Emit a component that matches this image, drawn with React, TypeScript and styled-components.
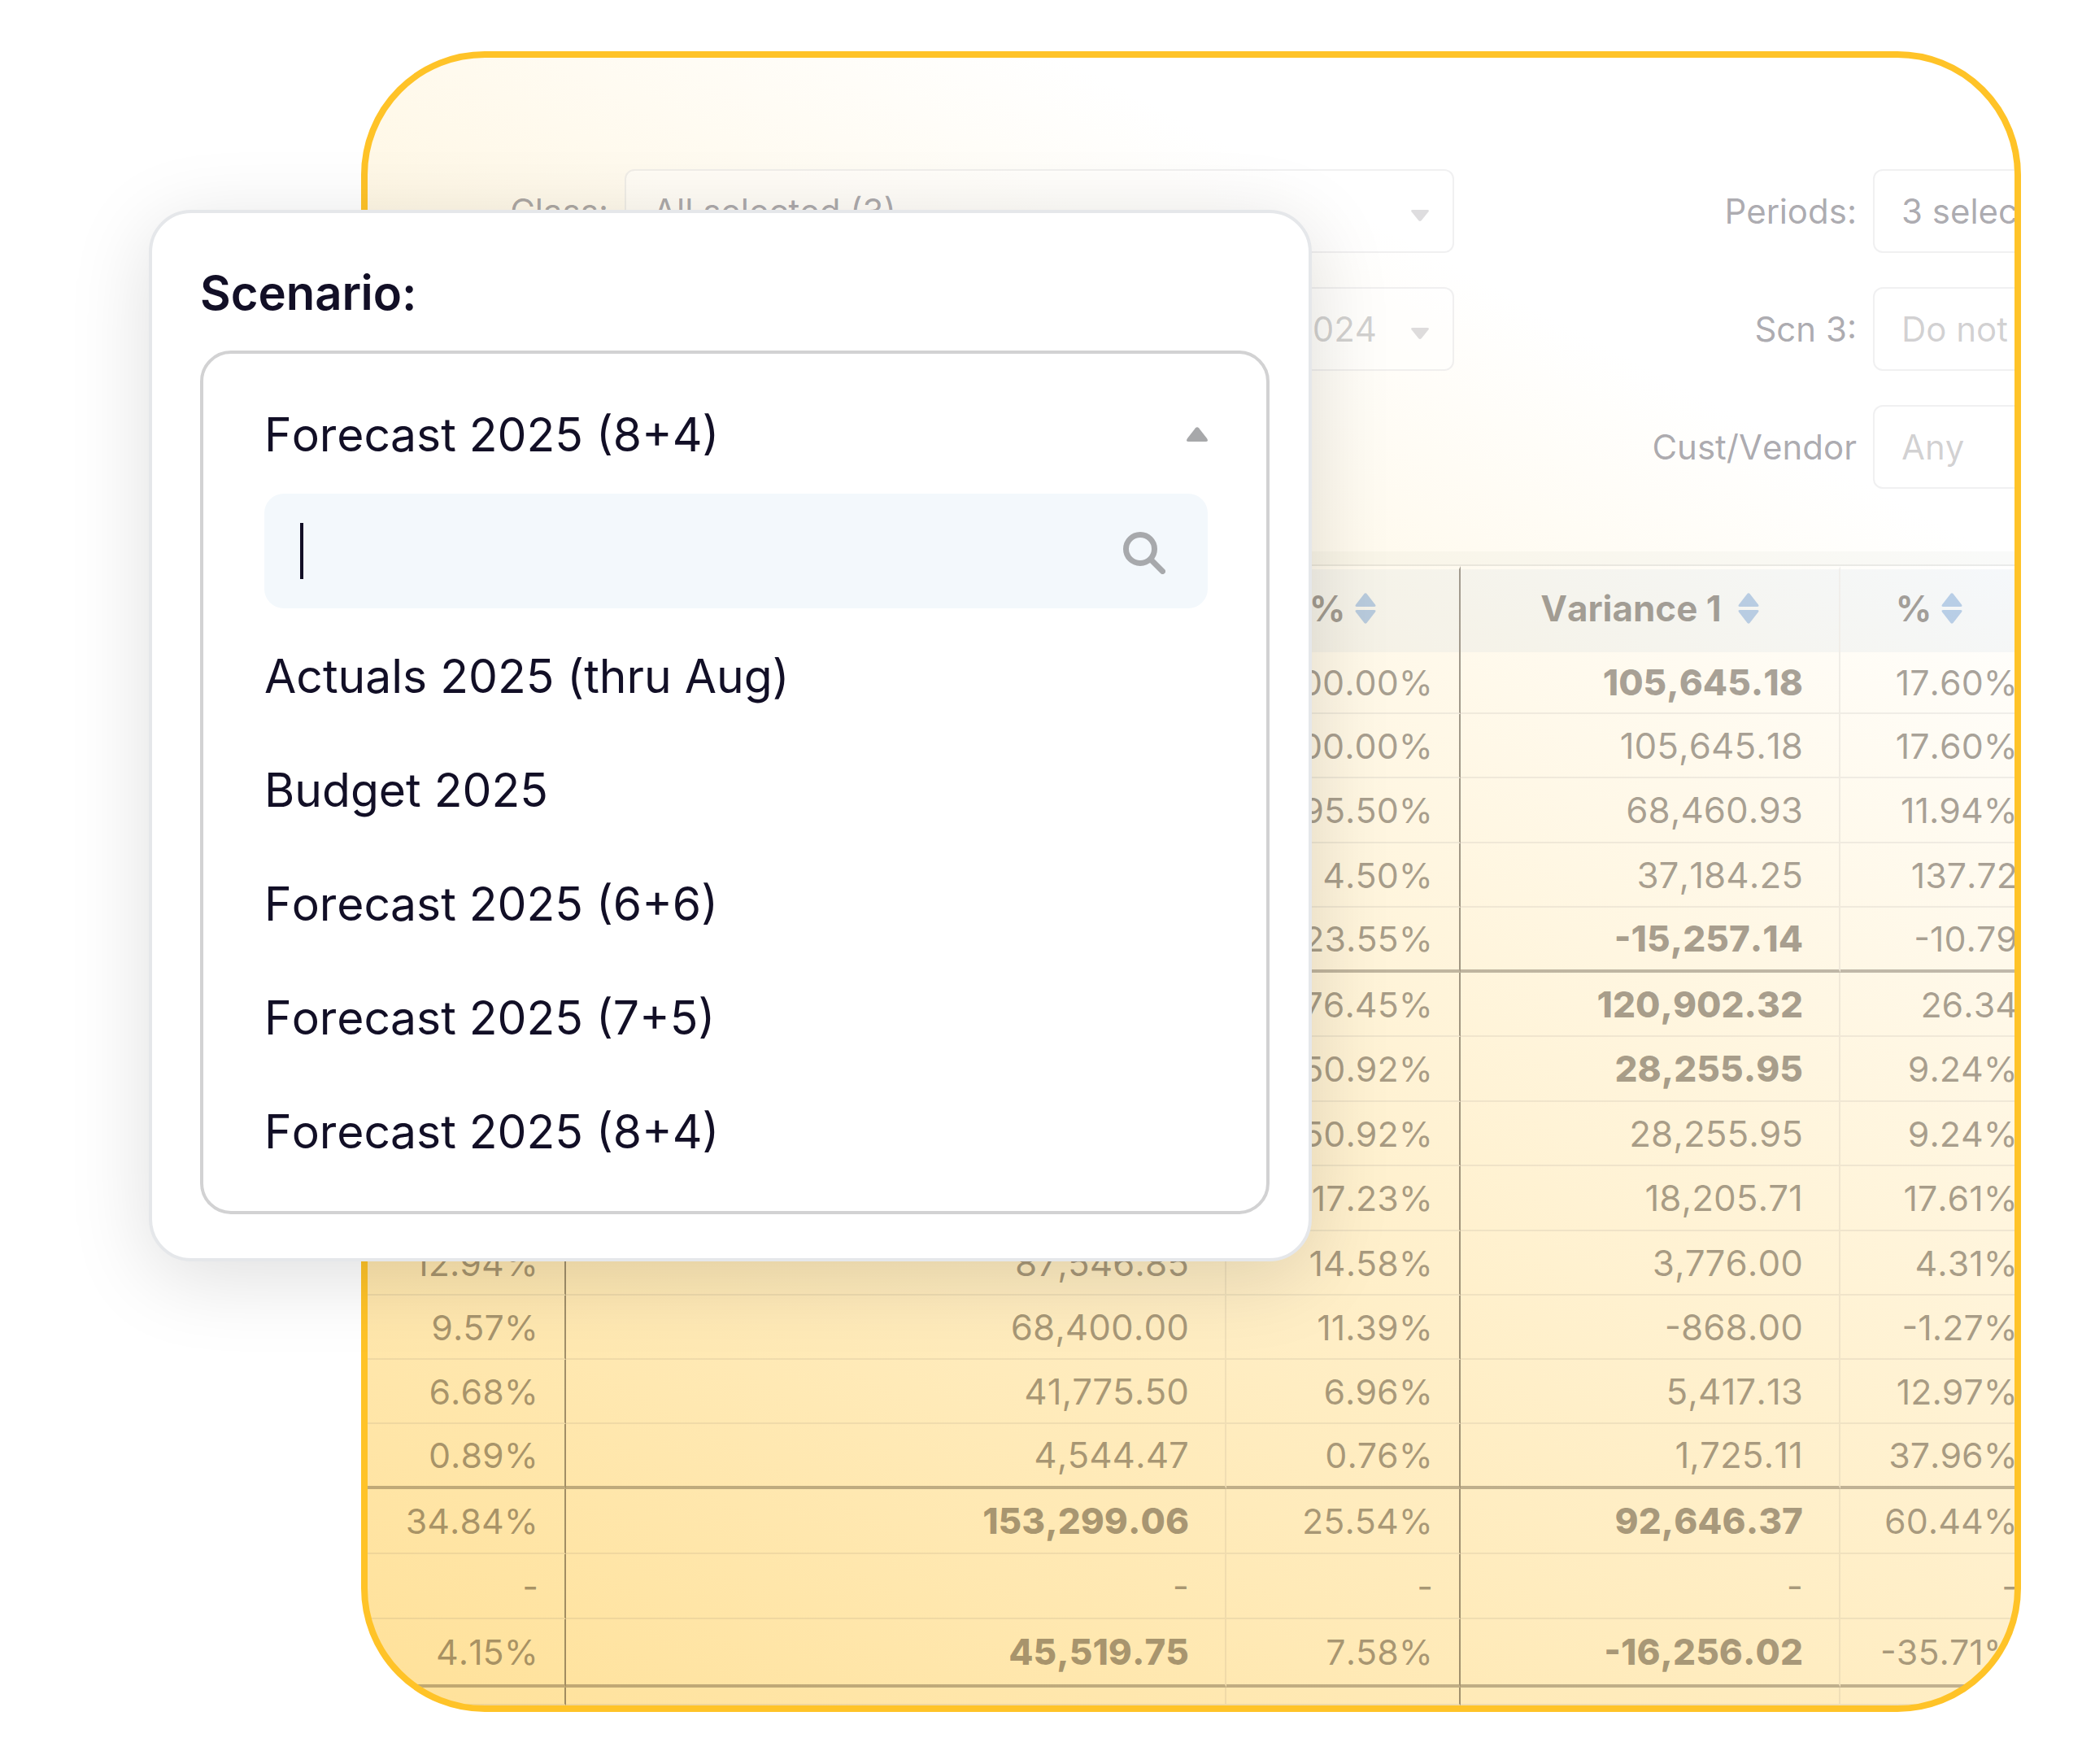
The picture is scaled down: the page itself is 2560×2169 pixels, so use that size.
import React, { useState } from "react";
import styled, { createGlobalStyle, css } from "styled-components";

const navy = "#120f26";
const faded = "rgba(18, 14, 30, 0.37)";
const cellInk = "rgba(24, 12, 0, 0.38)";
const hairline = "rgba(40, 40, 60, 0.07)";

const GlobalStyle = createGlobalStyle`
  *, *::before, *::after { box-sizing: border-box; }
  body { margin: 0; background: #fff; }
  body, button, input, select {
    font-family: Inter, "Liberation Sans", sans-serif;
    font-kerning: none;
  }
`;

const Page = styled.main`
  position: relative;
  padding: 63px 75px 65px 444px;
`;

const Report = styled.section`
  overflow: hidden;
  border: 8px solid #ffc328;
  border-radius: 152px;
  background: linear-gradient(208deg, #fff 20%, #ffe199 100%);
`;

const Filters = styled.div`
  display: grid;
  grid-template-columns: minmax(0, 316fr) minmax(0, 1020fr) minmax(0, 515fr) minmax(0, 174fr);
  grid-auto-rows: 103px;
  row-gap: 42px;
  padding: 137px 0 77px;
`;

const FilterLabel = styled.label<{ $column: number }>`
  grid-column: ${(p) => p.$column};
  align-self: center;
  padding-right: 20px;
  text-align: right;
  font-size: 42px;
  line-height: 52px;
  white-space: nowrap;
  color: ${faded};
`;

const FilterBox = styled.div<{ $wide?: boolean }>`
  display: flex;
  align-items: center;
  width: ${(p) => (p.$wide ? "auto" : "400px")};
  padding: 0 29px 0 33px;
  border: 2px solid ${hairline};
  border-radius: 12px;
  background: rgba(255, 255, 255, 0.4);
`;

const FilterSelect = styled.select<{ $muted?: boolean; $end?: boolean }>`
  flex: 1;
  min-width: 0;
  height: 100%;
  padding: 0 42px 0 0;
  border: 0;
  appearance: none;
  background: transparent;
  font-size: 42px;
  color: ${(p) => (p.$muted ? "rgba(18, 14, 20, 0.2)" : faded)};
  text-align-last: ${(p) => (p.$end ? "right" : "left")};
`;

const FilterCaret = styled.svg`
  width: 22px;
  height: 14px;
  margin-top: 10px;
  fill: rgba(18, 14, 30, 0.14);
`;

const TableEdge = styled.div`
  height: 18px;
  border-bottom: 2px solid rgba(40, 40, 40, 0.07);
  background: rgba(60, 80, 60, 0.03);
`;

const Table = styled.table`
  width: calc(100% + 4px);
  table-layout: fixed;
  border-collapse: separate;
  border-spacing: 0;
  font-size: 44px;
  line-height: 52px;
  color: ${cellInk};
`;

const Col = styled.col<{ $share: number }>`
  width: ${(p) => p.$share}%;
`;

type Rule = "dark" | "light" | "none";

const sideRule = css<{ $rule: Rule }>`
  border-right: ${(p) =>
    p.$rule === "dark"
      ? "2px solid rgba(22, 12, 0, 0.4)"
      : p.$rule === "light"
      ? `2px solid ${hairline}`
      : "0"};
`;

const Heading = styled.th<{ $rule: Rule }>`
  height: 106px;
  padding: 0 0 6px;
  border-top: 4px solid transparent;
  background: rgba(60, 110, 170, 0.05);
  background-clip: padding-box;
  font-weight: 700;
  ${sideRule}
`;

const HeadingInner = styled.span<{ $gap: number }>`
  display: flex;
  align-items: center;
  justify-content: center;
  gap: ${(p) => p.$gap}px;
`;

const SortButton = styled.button`
  display: flex;
  padding: 0;
  border: 0;
  background: none;
  svg {
    width: 26px;
    height: 38px;
    fill: rgba(72, 130, 198, 0.35);
  }
`;

const Row = styled.tr<{ $height: number; $heavy?: boolean }>`
  height: ${(p) => p.$height}px;
  td {
    border-bottom: ${(p) =>
      p.$heavy ? "4px solid rgba(22, 12, 0, 0.27)" : `2px solid ${hairline}`};
  }
`;

const Cell = styled.td<{ $rule: Rule; $pad: number; $amount: boolean; $bold?: boolean }>`
  padding: 0 ${(p) => p.$pad}px 0 0;
  text-align: right;
  white-space: nowrap;
  font-size: ${(p) => (p.$amount ? 44 : 43)}px;
  font-weight: ${(p) => (p.$bold ? 800 : 400)};
  ${sideRule}
`;

const Popup = styled.section`
  position: absolute;
  top: 258px;
  left: 183px;
  width: 1430px;
  padding: 62px 48px 54px 59px;
  border: 4px solid #e5e7ea;
  border-radius: 52px;
  background: #fff;
  box-shadow: 0 20px 100px rgba(0, 0, 0, 0.13);
  color: ${navy};
`;

const PopupTitle = styled.h2`
  margin: 0 0 35px;
  font-size: 58px;
  line-height: 72px;
  font-weight: 600;
`;

const Dropdown = styled.div`
  padding: 28px 72px 28px 75px;
  border: 4px solid #d2d2d3;
  border-radius: 38px;
`;

const Current = styled.button`
  display: flex;
  align-items: center;
  justify-content: space-between;
  width: 100%;
  height: 144px;
  padding: 0 0 2px;
  border: 0;
  background: none;
  font-size: 57px;
  color: inherit;
  svg {
    width: 26px;
    height: 18px;
    fill: #a7a8aa;
  }
`;

const SearchField = styled.label`
  display: flex;
  align-items: center;
  height: 141px;
  margin-bottom: 13px;
  padding: 0 52px 0 44px;
  border-radius: 24px;
  background: #f3f8fc;
  svg {
    width: 52px;
    height: 52px;
    margin-top: 4px;
    stroke: #a7a9ac;
  }
`;

const Caret = styled.span`
  width: 4px;
  height: 69px;
  background: ${navy};
`;

const SearchInput = styled.input`
  flex: 1;
  min-width: 0;
  height: 100%;
  border: 0;
  outline: 0;
  background: transparent;
  font-size: 57px;
  color: inherit;
  caret-color: transparent;
`;

const Options = styled.ul`
  margin: 0;
  padding: 0;
  list-style: none;
`;

const Option = styled.button`
  display: block;
  width: 100%;
  height: 140px;
  padding: 0;
  border: 0;
  background: none;
  text-align: left;
  font-size: 57px;
  color: inherit;
`;

const Down = () => (
  <FilterCaret viewBox="0 0 22 14" aria-hidden="true">
    <path d="M2 0h18q3 0 1.300 2.500l-8.500 10.500q-1.800 2-3.600 0L.7 2.500Q-1 0 2 0z" />
  </FilterCaret>
);

const Sorter = ({ name }: { name: string }) => (
  <SortButton type="button" aria-label={`Sort by ${name}`}>
    <svg viewBox="0 0 26 38" aria-hidden="true">
      <path d="M11.500 1q1.500-1.600 3 0l10.500 13.500q1.500 2.500-1.500 2.500h-21q-3 0-1.500-2.500z" />
      <path d="M11.500 37q1.500 1.600 3 0l10.500-13.500q1.500-2.500-1.500-2.500h-21q-3 0-1.500 2.500z" />
    </svg>
  </SortButton>
);

type Line = {
  cells: [string, string, string, string, string];
  strong?: boolean;
  heavy?: boolean;
  height: number;
};

const lines: Line[] = [
  { cells: ["", "", "100.00%", "105,645.18", "17.60%"], strong: true, height: 76 },
  { cells: ["", "", "100.00%", "105,645.18", "17.60%"], height: 79 },
  { cells: ["", "", "95.50%", "68,460.93", "11.94%"], height: 80 },
  { cells: ["", "", "4.50%", "37,184.25", "137.72"], height: 79 },
  { cells: ["", "", "23.55%", "-15,257.14", "-10.79"], strong: true, heavy: true, height: 80 },
  { cells: ["", "", "76.45%", "120,902.32", "26.34"], strong: true, height: 79 },
  { cells: ["", "", "50.92%", "28,255.95", "9.24%"], strong: true, height: 80 },
  { cells: ["", "", "50.92%", "28,255.95", "9.24%"], height: 79 },
  { cells: ["", "", "17.23%", "18,205.71", "17.61%"], height: 80 },
  { cells: ["12.94%", "87,546.85", "14.58%", "3,776.00", "4.31%"], height: 79 },
  { cells: ["9.57%", "68,400.00", "11.39%", "-868.00", "-1.27%"], height: 79 },
  { cells: ["6.68%", "41,775.50", "6.96%", "5,417.13", "12.97%"], height: 79 },
  { cells: ["0.89%", "4,544.47", "0.76%", "1,725.11", "37.96%"], heavy: true, height: 80 },
  { cells: ["34.84%", "153,299.06", "25.54%", "92,646.37", "60.44%"], strong: true, height: 80 },
  { cells: ["-", "-", "-", "-", "-"], height: 80 },
  { cells: ["4.15%", "45,519.75", "7.58%", "-16,256.02", "-35.71%"], strong: true, heavy: true, height: 84 },
  { cells: ["", "", "", "", ""], height: 22 },
];

const columns: {
  title: string;
  rule: Rule;
  pad: number;
  share: number;
  gap: number;
  amount: boolean;
}[] = [
  { title: "", rule: "dark", pad: 32, share: 244, gap: 0, amount: false },
  { title: "", rule: "light", pad: 44, share: 812, gap: 0, amount: true },
  { title: "%", rule: "dark", pad: 32, share: 288, gap: 12, amount: false },
  { title: "Variance 1", rule: "light", pad: 44, share: 467, gap: 20, amount: true },
  { title: "%", rule: "none", pad: 0, share: 218, gap: 12, amount: false },
];
const totalShare = 2029;

const scenarios = [
  "Actuals 2025 (thru Aug)",
  "Budget 2025",
  "Forecast 2025 (6+6)",
  "Forecast 2025 (7+5)",
  "Forecast 2025 (8+4)",
];

export default function App() {
  const [scenario, setScenario] = useState("Forecast 2025 (8+4)");
  const [query, setQuery] = useState("");
  const shown = scenarios.filter((s) => s.toLowerCase().includes(query.toLowerCase()));

  return (
    <Page>
      <GlobalStyle />
      <Report>
        <Filters>
          <FilterLabel $column={1} htmlFor="class">Class:</FilterLabel>
          <FilterBox $wide>
            <FilterSelect id="class"><option>All selected (3)</option></FilterSelect>
            <Down />
          </FilterBox>
          <FilterLabel $column={3} htmlFor="periods">Periods:</FilterLabel>
          <FilterBox>
            <FilterSelect id="periods"><option>3 selected</option></FilterSelect>
          </FilterBox>

          <FilterLabel $column={1} htmlFor="scn2" />
          <FilterBox $wide>
            <FilterSelect id="scn2" $muted $end><option>2024</option></FilterSelect>
            <Down />
          </FilterBox>
          <FilterLabel $column={3} htmlFor="scn3">Scn 3:</FilterLabel>
          <FilterBox>
            <FilterSelect id="scn3" $muted><option>Do not</option></FilterSelect>
          </FilterBox>

          <FilterLabel $column={3} htmlFor="vendor">Cust/Vendor</FilterLabel>
          <FilterBox>
            <FilterSelect id="vendor" $muted><option>Any</option></FilterSelect>
          </FilterBox>
        </Filters>

        <TableEdge />
        <Table>
          <colgroup>
            {columns.map((c, i) => (
              <Col key={i} $share={(c.share / totalShare) * 100} />
            ))}
          </colgroup>
          <thead>
            <tr>
              {columns.map((c, i) => (
                <Heading key={i} $rule={c.rule} scope="col">
                  {c.title && (
                    <HeadingInner $gap={c.gap}>
                      {c.title}
                      <Sorter name={c.title} />
                    </HeadingInner>
                  )}
                </Heading>
              ))}
            </tr>
          </thead>
          <tbody>
            {lines.map((line, r) => (
              <Row key={r} $height={line.height} $heavy={line.heavy}>
                {line.cells.map((text, i) => (
                  <Cell
                    key={i}
                    $rule={columns[i].rule}
                    $pad={columns[i].pad}
                    $amount={columns[i].amount}
                    $bold={line.strong && columns[i].amount}
                  >
                    {text}
                  </Cell>
                ))}
              </Row>
            ))}
          </tbody>
        </Table>
      </Report>

      <Popup aria-labelledby="scenario-title">
        <PopupTitle id="scenario-title">Scenario:</PopupTitle>
        <Dropdown>
          <Current type="button" aria-haspopup="listbox" aria-expanded="true">
            {scenario}
            <svg viewBox="0 0 26 18" aria-hidden="true">
              <path d="M11 1.200q2-2 4 0l10 12.800q2.500 4-1.500 4h-21q-4 0-1.500-4z" />
            </svg>
          </Current>
          <SearchField>
            <Caret />
            <SearchInput
              type="text"
              aria-label="Search scenarios"
              value={query}
              onChange={(e) => setQuery(e.target.value)}
            />
            <svg viewBox="0 0 52 52" fill="none" strokeWidth="7" strokeLinecap="round" aria-hidden="true">
              <circle cx="21" cy="21" r="17.500" />
              <path d="M34 34l14.500 14.500" />
            </svg>
          </SearchField>
          <Options>
            {shown.map((s) => (
              <li key={s}>
                <Option type="button" onClick={() => setScenario(s)}>{s}</Option>
              </li>
            ))}
          </Options>
        </Dropdown>
      </Popup>
    </Page>
  );
}
